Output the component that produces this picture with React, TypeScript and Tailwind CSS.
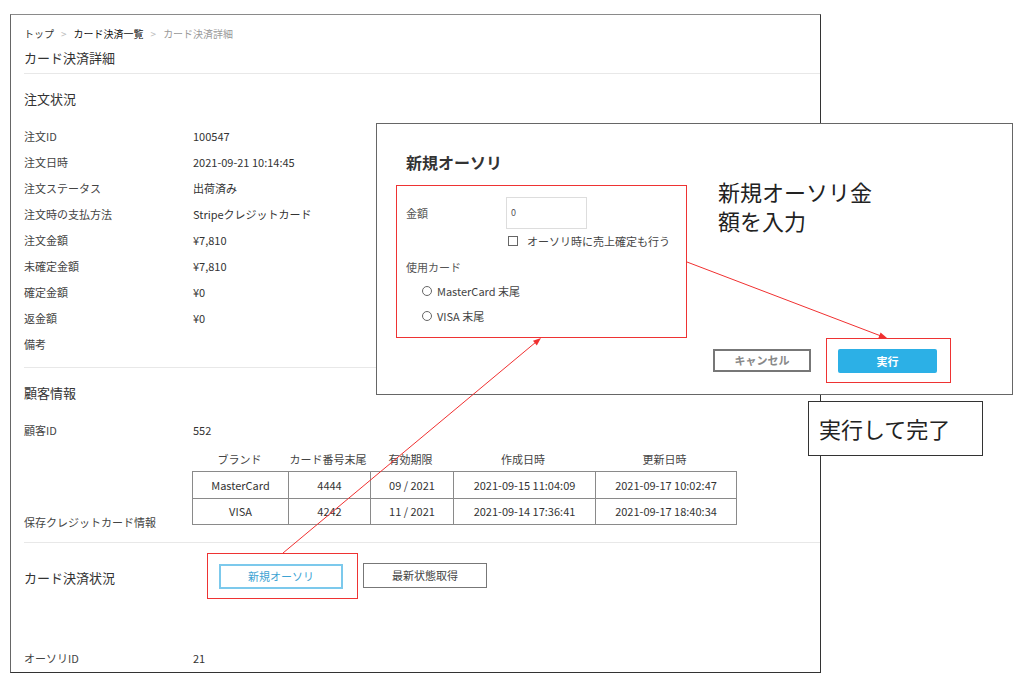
import * as React from "react";

const orderRows: [string, string][] = [
  ["注文ID", "100547"],
  ["注文日時", "2021-09-21 10:14:45"],
  ["注文ステータス", "出荷済み"],
  ["注文時の支払方法", "Stripeクレジットカード"],
  ["注文金額", "¥7,810"],
  ["未確定金額", "¥7,810"],
  ["確定金額", "¥0"],
  ["返金額", "¥0"],
  ["備考", ""],
];

const cards = [
  ["MasterCard", "4444", "09 / 2021", "2021-09-15 11:04:09", "2021-09-17 10:02:47"],
  ["VISA", "4242", "11 / 2021", "2021-09-14 17:36:41", "2021-09-17 18:40:34"],
];

const heads = ["ブランド", "カード番号末尾", "有効期限", "作成日時", "更新日時"];
const colW = ["w-[95px]", "w-[82px]", "w-[83px]", "w-[142px]", "w-[141px]"];

const Row = ({ label, value }: { label: string; value: string }) => (
  <div className="flex h-[26px] items-center text-[11px]">
    <div className="w-[169px] text-[#444]">{label}</div>
    <div className="text-[#333]">{value}</div>
  </div>
);

// red annotation frame
const RedBox = ({ className, children }: { className: string; children: React.ReactNode }) => (
  <div className={`border border-solid border-[#ee3333] ${className}`}>{children}</div>
);

const App = () => {
  return (
    <div
      className="relative h-[677px] w-[1024px] overflow-hidden bg-white pt-[14px]"
      style={{ fontFamily: '"Noto Sans CJK JP", "Noto Sans", sans-serif' }}
    >
      {/* page */}
      <div className="ml-[10px] h-[659px] w-[811px] border border-[#333] border-t-[#8a8a8a] border-l-[#666] pl-[13px]">
        <div className="flex h-[28px] items-end pb-[2px] text-[10px]">
          <span className="text-[#333]">トップ</span>
          <span className="mx-[7px] text-[#bbb]">&gt;</span>
          <span className="text-[#111]">カード決済一覧</span>
          <span className="mx-[7px] text-[#bbb]">&gt;</span>
          <span className="text-[#999]">カード決済詳細</span>
        </div>
        <div className="flex h-[30px] items-center text-[13px] text-[#333]">カード決済詳細</div>
        <div className="h-px bg-[#e8e8e8]" />
        <div className="flex h-[49px] items-center text-[13px] text-[#333]">注文状況</div>
        {orderRows.map(([l, v]) => (
          <Row key={l} label={l} value={v} />
        ))}
        <div className="mt-[10px] h-px bg-[#e8e8e8]" />
        <div className="flex h-[49px] items-center text-[13px] text-[#333]">顧客情報</div>
        <Row label="顧客ID" value="552" />
        <div className="flex h-[99px]">
          <div className="mb-[12px] flex w-[168px] items-end text-[11px] text-[#444]">保存クレジットカード情報</div>
          <div className="pt-[4px]">
            <div className="flex h-[24px] items-center text-[11px] text-[#444]">
              {heads.map((h, i) => (
                <div key={h} className={`${colW[i]} text-center`}>
                  {h}
                </div>
              ))}
            </div>
            <div className="border border-[#8a8a8a]">
              {cards.map((c, r) => (
                <div key={c[0]} className={`flex h-[26px] ${r > 0 ? "border-t border-[#8a8a8a]" : ""}`}>
                  {c.map((v, i) => (
                    <div
                      key={i}
                      className={`${colW[i]} flex items-center justify-center text-[11px] text-[#333] ${i > 0 ? "border-l border-[#8a8a8a]" : ""}`}
                    >
                      {v}
                    </div>
                  ))}
                </div>
              ))}
            </div>
          </div>
        </div>
        <div className="h-px bg-[#e8e8e8]" />
        <div className="flex items-center pt-[10px]">
          <div className="w-[183px] pt-[4px] text-[13px] text-[#333]">カード決済状況</div>
          <div className="border border-transparent pb-[8px] pl-[11px] pr-[14px] pt-[10px]">
            <div className="flex h-[25px] w-[124px] items-center justify-center border-2 border-[#7cc9ec] text-[11px] text-[#3ea3d3]">
              新規オーソリ
            </div>
          </div>
          <div className="ml-[5px] flex h-[25px] w-[124px] items-center justify-center border-[1.5px] border-[#777] text-[11px] text-[#444]">
            最新状態取得
          </div>
        </div>
        <div className="mt-[47px]">
          <Row label="オーソリID" value="21" />
        </div>
      </div>

      {/* modal */}
      <div className="absolute left-[376px] top-[123px] h-[272px] w-[637px] border-[1.5px] border-[#666] bg-white pl-[19px] pt-[26px]">
        <div className="flex h-[24px] items-center pl-[10px] text-[16px] font-bold text-[#333]">新規オーソリ</div>
        <div className="mt-[11px] flex items-start">
          <RedBox className="h-[153px] w-[291px] pl-[9px] pt-[11px]">
            <div className="flex items-center">
              <div className="w-[100px] text-[11px] text-[#555]">金額</div>
              <div className="flex h-[32px] w-[81px] items-center border border-[#ddd] pl-[4px] text-[9px] text-[#555]">0</div>
            </div>
            <div className="ml-[102px] mt-[4px] flex items-center gap-[9px] text-[11px] text-[#444]">
              <span className="h-[10px] w-[10px] border border-[#666]" />
              オーソリ時に売上確定も行う
            </div>
            <div className="mt-[10px] flex h-[16px] items-center text-[11px] text-[#555]">使用カード</div>
            <div className="mt-[3px] pl-[16px]">
              {["MasterCard 末尾", "VISA 末尾"].map((t) => (
                <div key={t} className="flex h-[25px] items-center gap-[5px] text-[11px] text-[#444]">
                  <span className="h-[10px] w-[10px] rounded-full border border-[#666]" />
                  {t}
                </div>
              ))}
            </div>
          </RedBox>
          <div className="ml-[31px] mt-[-8px] text-[22px] leading-[29px] text-[#222]">
            新規オーソリ金
            <br />
            額を入力
          </div>
        </div>
        <div className="flex items-center justify-end pr-[61px]">
          <div className="flex h-[23px] w-[98px] items-center justify-center border-2 border-[#777] text-[11px] font-bold text-[#888]">
            キャンセル
          </div>
          <RedBox className="ml-[15px] h-[45px] w-[125px] pl-[11px] pt-[10px]">
            <div className="flex h-[24px] w-[99px] items-center justify-center rounded-[2px] bg-[#2cb0e6] text-[11px] font-bold text-white">
              実行
            </div>
          </RedBox>
        </div>
      </div>

      {/* callout */}
      <div className="absolute left-[808px] top-[401px] flex h-[55px] w-[175px] items-center border-[1.5px] border-[#333] bg-white pl-[10px] text-[22px] text-[#222]">
        実行して完了
      </div>

      {/* annotation arrows and frame */}
      <svg className="pointer-events-none absolute left-0 top-0" width="1024" height="677" viewBox="0 0 1024 677">
        <rect x="207.5" y="553.5" width="150" height="45" fill="none" stroke="#ee3333" strokeWidth="1" />
        <line x1="687" y1="262" x2="881" y2="336" stroke="#f03030" strokeWidth="1" />
        <polygon points="887,338 878.4,338 880.6,332.4" fill="#f03030" />
        <line x1="283" y1="553" x2="536" y2="342" stroke="#f03030" strokeWidth="1" />
        <polygon points="541,338 536.8,345.4 533,340.8" fill="#f03030" />
      </svg>
    </div>
  );
};

export default App;
